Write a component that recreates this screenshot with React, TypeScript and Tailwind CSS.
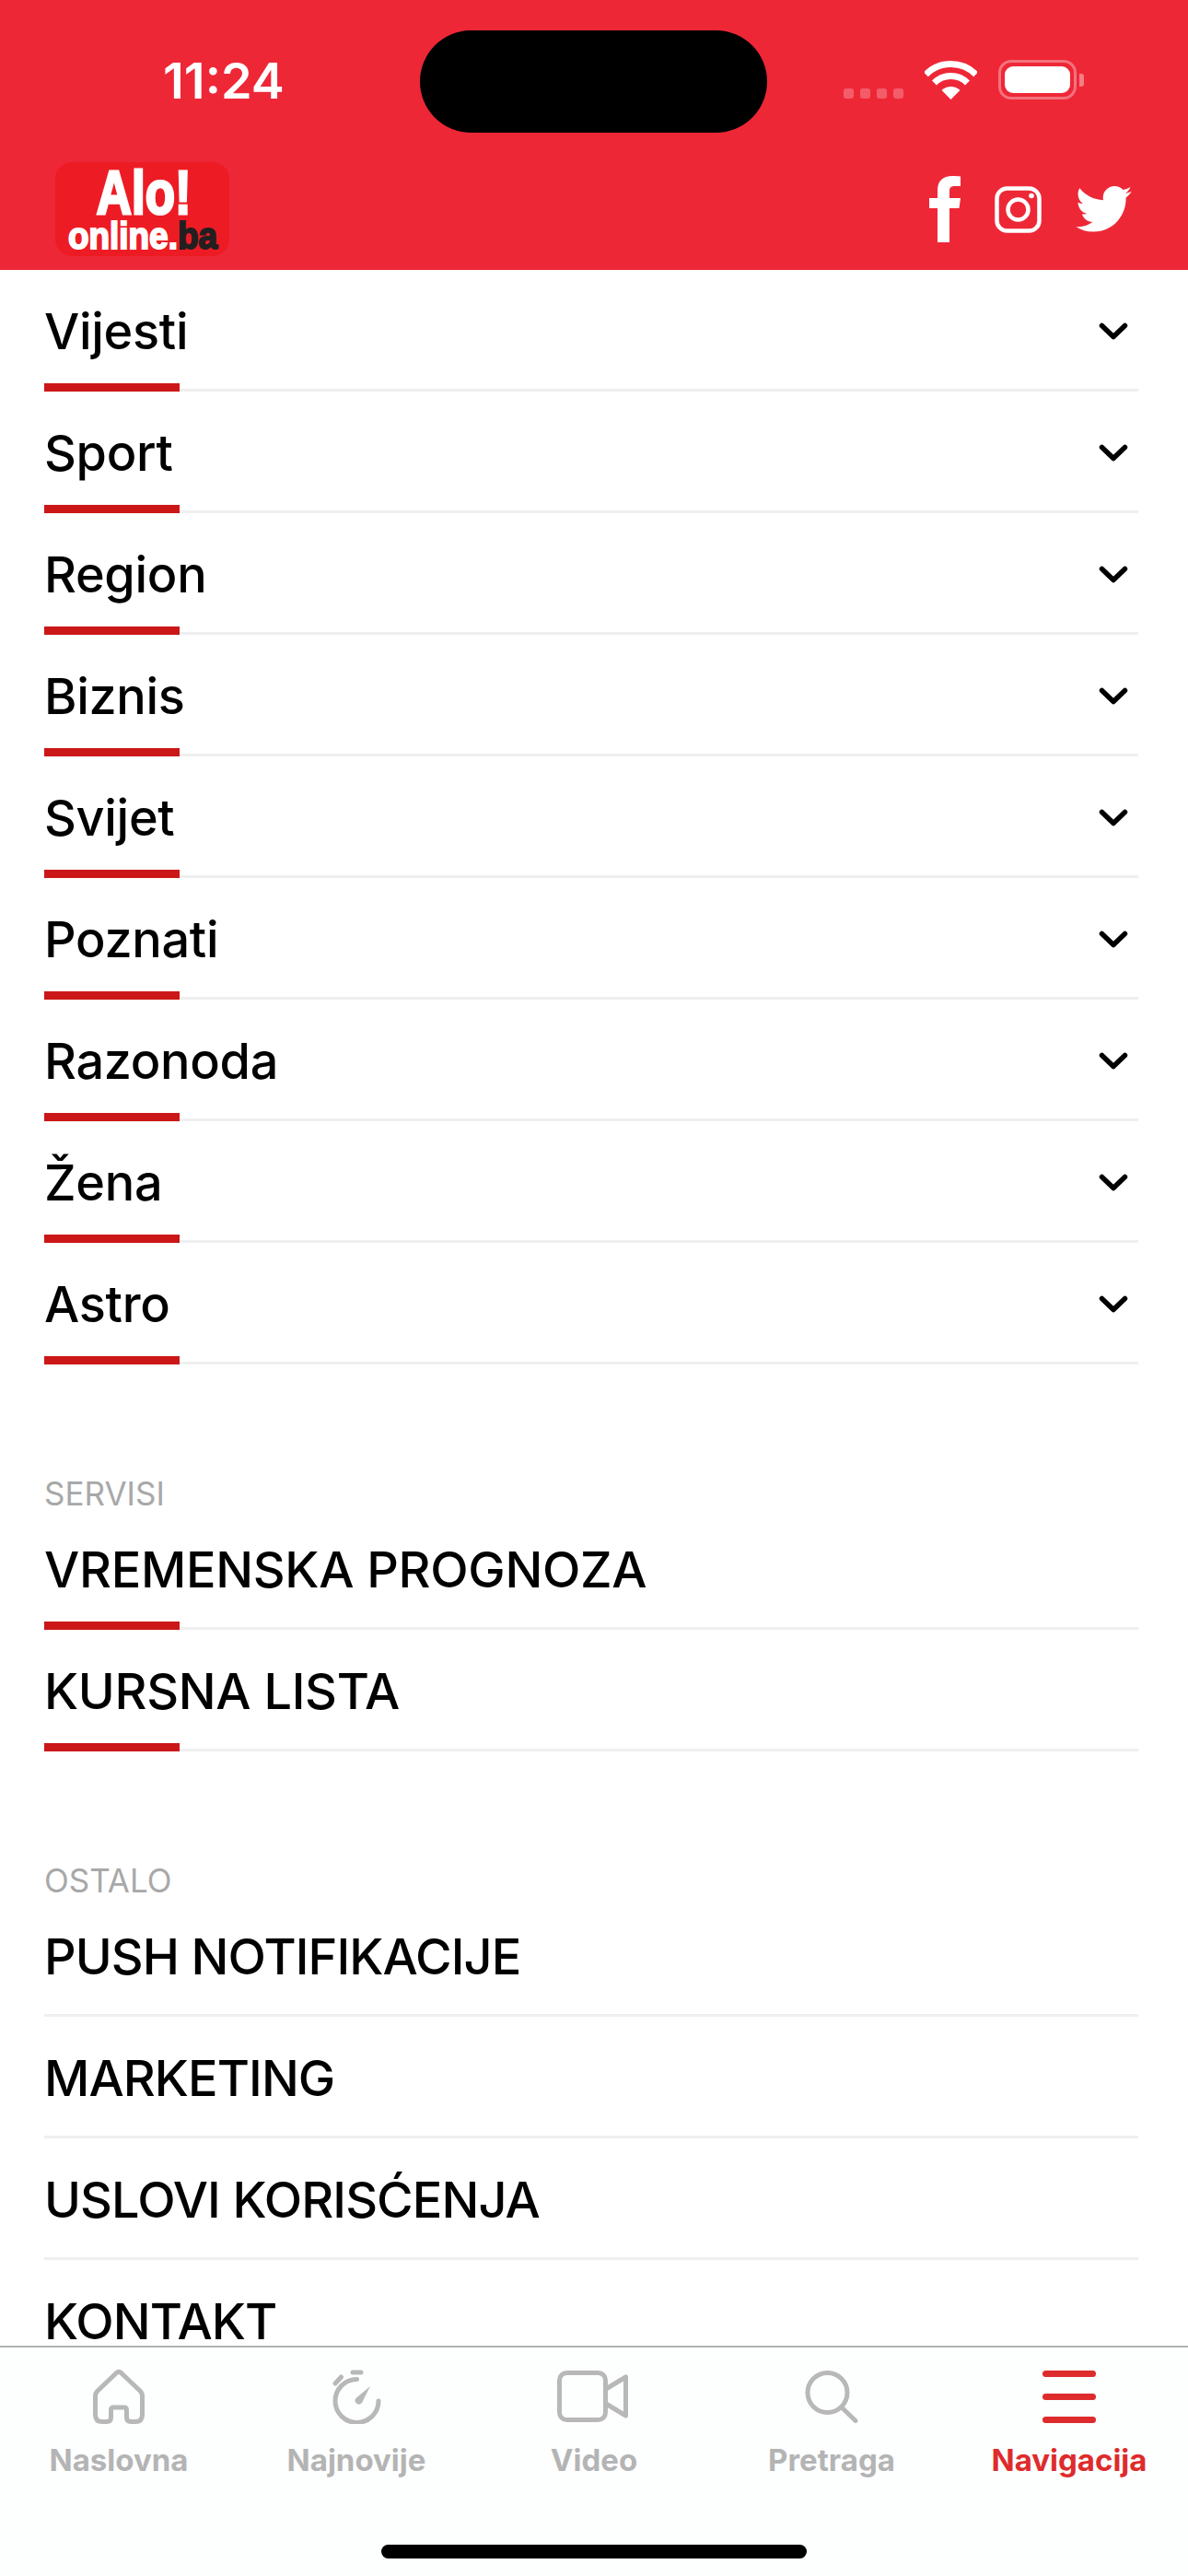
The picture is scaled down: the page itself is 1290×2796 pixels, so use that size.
import { ReactNode } from "react";

const mainItems = ["Vijesti", "Sport", "Region", "Biznis", "Svijet", "Poznati", "Razonoda", "Žena", "Astro"];
const serviceItems = ["VREMENSKA PROGNOZA", "KURSNA LISTA"];
const otherItems = ["PUSH NOTIFIKACIJE", "MARKETING", "USLOVI KORISĆENJA", "KONTAKT"];

function Chevron() {
  return (
    <svg width="32" height="19" viewBox="0 0 32 19" fill="none" stroke="#000" strokeWidth="5.5" strokeLinecap="round" strokeLinejoin="round">
      <path d="M3.5 3.5 16 15.5 28.5 3.5" />
    </svg>
  );
}

function MenuRow({ label, chevron, accent }: { label: string; chevron?: boolean; accent?: boolean }) {
  return (
    <div className="relative flex h-[132px] items-start justify-between border-b-[3px] border-[#efefef] pt-[41px]">
      <span className={`text-[54px] font-[450] leading-[52px] text-black ${accent ? "tracking-[-0.3px]" : "tracking-[-0.9px]"}`}>{label}</span>
      {chevron ? (
        <span className="mr-[11px] mt-[16px]">
          <Chevron />
        </span>
      ) : null}
      {accent ? <span className="absolute bottom-[-3px] left-0 h-[9px] w-[147px] bg-[#cc1718]" /> : null}
    </div>
  );
}

function SectionLabel({ children }: { children: ReactNode }) {
  return <div className="pt-[125px] text-[35px] leading-[31px] text-[#a8a8a8]">{children}</div>;
}

function Tab({ icon, label, active }: { icon: ReactNode; label: string; active?: boolean }) {
  return (
    <div className="flex flex-col items-center">
      <div className="flex h-[60px] items-center justify-center">{icon}</div>
      <span className={`mt-[19px] text-[33px] font-bold leading-[40px] ${active ? "text-[#de2b2c]" : "text-[#b4b4b4]"}`}>{label}</span>
    </div>
  );
}

const gray = "#b8b8b8";

export default function App() {
  return (
    <div className="flex h-[2796px] w-[1290px] flex-col overflow-hidden bg-white font-['Inter','Noto_Sans',sans-serif]">
      <header className="relative h-[293px] shrink-0 bg-[#ee2737]">
        <div className="absolute left-[456px] top-[33px] h-[111px] w-[377px] rounded-full bg-black" />
        <div className="flex h-[108px] items-end justify-between pl-[177px] pr-[113px]">
          <span className="mb-[-6px] text-[54px] font-semibold leading-[53px] text-white">11:24</span>
          <div className="flex items-end">
            <div className="mb-px flex gap-[7px]">
              <span className="h-[11px] w-[11px] rounded-[3px] bg-white/25" />
              <span className="h-[11px] w-[11px] rounded-[3px] bg-white/25" />
              <span className="h-[11px] w-[11px] rounded-[3px] bg-white/25" />
              <span className="h-[11px] w-[11px] rounded-[3px] bg-white/25" />
            </div>
            <svg className="ml-[23px]" width="57" height="42" viewBox="0 0 57 42" fill="none" stroke="#fff" strokeWidth="7">
              <path d="M1.3 14.8A38.5 38.5 0 0 1 55.7 14.8" />
              <path d="M10.5 24A25.5 25.5 0 0 1 46.5 24" />
              <path d="M28.5 42 18.6 32.1A14 14 0 0 1 38.4 32.1Z" fill="#fff" stroke="none" />
            </svg>
            <div className="ml-[23px] flex items-center">
              <div className="flex h-[43px] w-[85px] items-center justify-center rounded-[14px] border-[3px] border-white/35">
                <div className="h-[29px] w-[71px] rounded-[9px] bg-white" />
              </div>
              <div className="ml-[3px] h-[14px] w-[5px] rounded-r-[3px] bg-white/40" />
            </div>
          </div>
        </div>
        <div className="mt-[68px] flex items-center justify-between pl-[60px] pr-[61px]">
          <div className="flex h-[102px] w-[189px] flex-col items-center rounded-[18px] bg-[#ed1c24] font-['Liberation_Sans',sans-serif] font-bold text-white">
            <span className="ml-[4px] mt-[8px] scale-x-[0.8] text-[66px] leading-[50px] [-webkit-text-stroke:3px_#fff]">Alo!</span>
            <span className="mt-[6px] scale-x-[0.9] whitespace-nowrap text-[41px] leading-[32px] [-webkit-text-stroke:2px_#fff]">
              online.<span className="text-[#231f20] [-webkit-text-stroke:2px_#231f20]">ba</span>
            </span>
          </div>
          <div className="flex items-center">
            <svg width="34" height="72" viewBox="0 0 34 72" fill="#fff">
              <path d="M9 72V35H0V24H9V16C9 5 15 0 25 0 29 0 32 .3 34 .5V11H28C23 11 22 13 22 17V24H34L32.5 35H22V72Z" />
            </svg>
            <svg className="ml-[37px]" width="51" height="51" viewBox="0 0 51 51" fill="none" stroke="#fff" strokeWidth="4.5">
              <rect x="2.5" y="2.5" width="46" height="46" rx="11" />
              <circle cx="25.5" cy="25.5" r="11" />
              <circle cx="40" cy="10.5" r="2.8" fill="#fff" stroke="none" />
            </svg>
            <svg className="ml-[37px]" width="61" height="50" viewBox="0 0 24 19.7" fill="#fff">
              <path d="M24 2.3c-.9.4-1.8.7-2.8.8 1-.6 1.8-1.6 2.2-2.7-1 .6-2 1-3.1 1.2C19.3.6 18 0 16.6 0c-2.7 0-4.9 2.2-4.9 4.9 0 .4 0 .8.1 1.1C7.7 5.8 4.1 3.9 1.7.9 1.2 1.6 1 2.5 1 3.4c0 1.7.9 3.2 2.2 4.1-.8 0-1.6-.2-2.2-.6v.1c0 2.4 1.7 4.4 3.9 4.8-.4.1-.8.2-1.3.2-.3 0-.6 0-.9-.1.6 2 2.4 3.4 4.6 3.4-1.7 1.3-3.8 2.1-6.1 2.1-.4 0-.8 0-1.2-.1 2.2 1.4 4.8 2.2 7.5 2.2 9.1 0 14-7.5 14-14v-.6c1-.7 1.8-1.6 2.5-2.6z" />
            </svg>
          </div>
        </div>
      </header>

      <main className="h-[2253px] shrink-0 overflow-hidden pl-[48px] pr-[54px]">
        {mainItems.map((item) => (
          <MenuRow key={item} label={item} chevron accent />
        ))}
        <SectionLabel>SERVISI</SectionLabel>
        {serviceItems.map((item) => (
          <MenuRow key={item} label={item} accent />
        ))}
        <SectionLabel>OSTALO</SectionLabel>
        {otherItems.map((item) => (
          <MenuRow key={item} label={item} />
        ))}
      </main>

      <footer className="flex flex-1 flex-col border-t-2 border-[#b2b2b2] bg-[#fdfefe]">
        <nav className="grid grid-cols-5 pt-[23px]">
          <Tab
            label="Naslovna"
            icon={
              <svg width="56" height="59" viewBox="0 0 56 59" fill="none" stroke={gray} strokeWidth="5" strokeLinejoin="round">
                <path d="M25.5 3.5 5 23Q2.5 25.5 2.5 29V49Q2.5 56.5 10 56.5H15Q19.5 56.5 19.5 52V44Q19.5 41 22 41H34Q36.5 41 36.5 44V52Q36.5 56.5 41 56.5H46Q53.5 56.5 53.5 49V29Q53.5 25.5 51 23L30.5 3.5Q28 1.5 25.5 3.5Z" />
              </svg>
            }
          />
          <Tab
            label="Najnovije"
            icon={
              <svg width="53" height="59" viewBox="0 0 53 59" fill="none" stroke={gray} strokeWidth="5" strokeLinecap="round">
                <path d="M26.5 10.5A23.5 23.5 0 1 0 50 34" />
                <path d="M22 3H31" />
                <path d="M3 15 9.5 8" />
                <path d="M41 18 32 36A4 4 0 0 1 25.5 31Z" fill={gray} stroke="none" />
              </svg>
            }
          />
          <Tab
            label="Video"
            icon={
              <svg className="mr-[4px]" width="77" height="56" viewBox="0 0 77 56" fill="none" stroke={gray} strokeWidth="5" strokeLinejoin="round">
                <rect x="2.5" y="2.5" width="50" height="51" rx="8" />
                <path d="M53 20 74.5 7V49L53 36" />
              </svg>
            }
          />
          <Tab
            label="Pretraga"
            icon={
              <svg width="58" height="57" viewBox="0 0 58 57" fill="none" stroke={gray} strokeWidth="5" strokeLinecap="round">
                <circle cx="24.5" cy="24" r="21.5" />
                <path d="M41 41 55 54.5" />
              </svg>
            }
          />
          <Tab
            label="Navigacija"
            active
            icon={
              <div className="flex h-[57px] w-[58px] flex-col justify-between">
                <span className="h-[7px] rounded-full bg-[#de2b2c]" />
                <span className="h-[7px] rounded-full bg-[#de2b2c]" />
                <span className="h-[7px] rounded-full bg-[#de2b2c]" />
              </div>
            }
          />
        </nav>
        <div className="mx-auto mt-[72px] h-[15px] w-[462px] rounded-full bg-black" />
      </footer>
    </div>
  );
}
